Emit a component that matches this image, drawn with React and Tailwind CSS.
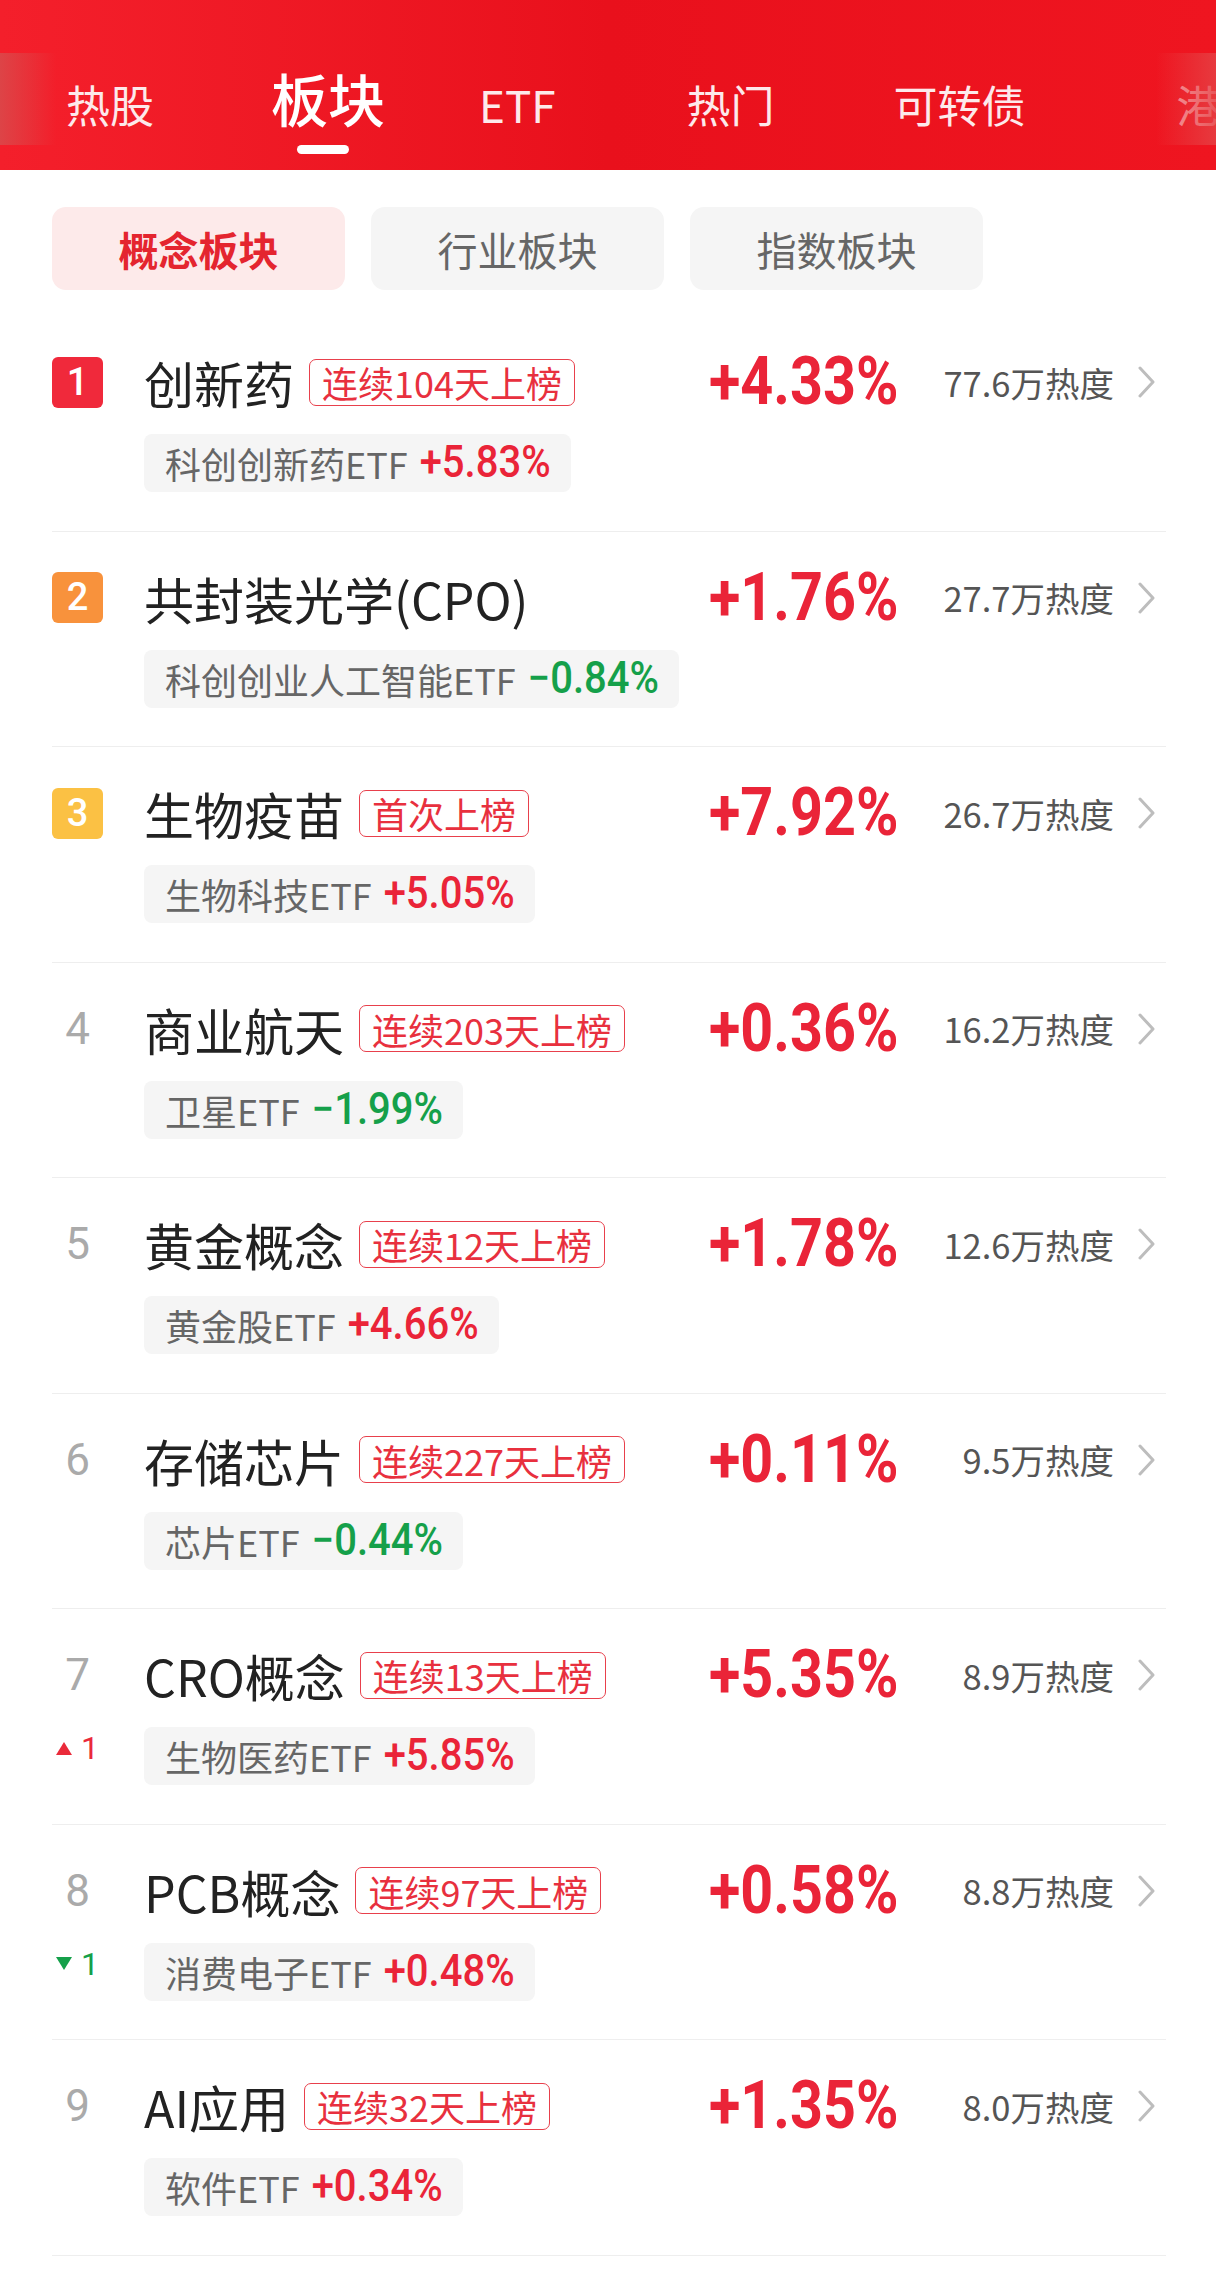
import React from 'react';

const cjk = "font-['Noto_Sans_CJK_SC','Noto_Sans',sans-serif]";
const num = "font-['Roboto','Noto_Sans_CJK_SC',sans-serif]";

const rows = [
  { rank: 1, name: '创新药', tag: '连续104天上榜', pct: '+4.33%', heat: '77.6万热度', etf: '科创创新药ETF', etfPct: '+5.83%', up: true },
  { rank: 2, name: '共封装光学(CPO)', tag: null, pct: '+1.76%', heat: '27.7万热度', etf: '科创创业人工智能ETF', etfPct: '−0.84%', up: false },
  { rank: 3, name: '生物疫苗', tag: '首次上榜', pct: '+7.92%', heat: '26.7万热度', etf: '生物科技ETF', etfPct: '+5.05%', up: true },
  { rank: 4, name: '商业航天', tag: '连续203天上榜', pct: '+0.36%', heat: '16.2万热度', etf: '卫星ETF', etfPct: '−1.99%', up: false },
  { rank: 5, name: '黄金概念', tag: '连续12天上榜', pct: '+1.78%', heat: '12.6万热度', etf: '黄金股ETF', etfPct: '+4.66%', up: true },
  { rank: 6, name: '存储芯片', tag: '连续227天上榜', pct: '+0.11%', heat: '9.5万热度', etf: '芯片ETF', etfPct: '−0.44%', up: false },
  { rank: 7, name: 'CRO概念', tag: '连续13天上榜', pct: '+5.35%', heat: '8.9万热度', etf: '生物医药ETF', etfPct: '+5.85%', up: true, change: 'up' },
  { rank: 8, name: 'PCB概念', tag: '连续97天上榜', pct: '+0.58%', heat: '8.8万热度', etf: '消费电子ETF', etfPct: '+0.48%', up: true, change: 'down' },
  { rank: 9, name: 'AI应用', tag: '连续32天上榜', pct: '+1.35%', heat: '8.0万热度', etf: '软件ETF', etfPct: '+0.34%', up: true },
];

const badgeColors = { 1: 'bg-[#f0293b]', 2: 'bg-[#f8923c]', 3: 'bg-[#fbc144]' };

const Rank = ({ rank }) => {
  if (badgeColors[rank]) {
    return (
      <div className={`w-[51px] h-[51px] rounded-[6px] flex items-center justify-center text-white text-[38px] font-medium ${num} ${badgeColors[rank]}`}>
        {rank}
      </div>
    );
  }
  return <span className={`text-[44px] leading-none text-[#aaaaaa] ${num}`}>{rank}</span>;
};

const Change = ({ dir }) => {
  if (!dir) return null;
  const up = dir === 'up';
  return (
    <div className={`flex items-center -translate-y-[8px] ${up ? 'text-[#ea2a3a]' : 'text-[#15a04a]'}`}>
      <svg width="16" height="13" viewBox="0 0 16 13">
        {up ? <polygon points="8,0 16,13 0,13" fill="currentColor" /> : <polygon points="0,0 16,0 8,13" fill="currentColor" />}
      </svg>
      <span className={`ml-[9px] text-[32px] leading-none ${num}`}>1</span>
    </div>
  );
};

const Chevron = () => (
  <svg width="17" height="32" viewBox="0 0 17 32" className="shrink-0">
    <polyline points="2,2 15,16 2,30" fill="none" stroke="#bdbdbd" strokeWidth="3" strokeLinecap="round" strokeLinejoin="round" />
  </svg>
);

const Row = ({ row }) => (
  <div className="flex border-b border-[#eeeeee] pt-[36px] pb-[38.5px]">
    <div className="w-[92px] flex flex-col shrink-0">
      <div className="h-[60px] w-[51px] flex items-center justify-center">
        <Rank rank={row.rank} />
      </div>
      <div className="mt-[22px] h-[58px] w-[51px] flex items-center justify-center">
        <Change dir={row.change} />
      </div>
    </div>
    <div className="flex-1 flex flex-col">
      <div className="h-[60px] flex items-center">
        <div className="w-[565px] flex items-center shrink-0">
          <span className={`text-[50px] leading-none text-[#222222] ${cjk}`}>{row.name}</span>
          {row.tag && (
            <span className={`ml-[15px] h-[47px] px-[12px] flex items-center border-[1.5px] border-[#e8404c] rounded-[7px] text-[36px] leading-none text-[#e8303e] ${cjk}`}>
              {row.tag}
            </span>
          )}
        </div>
        <div className="w-[187px] shrink-0">
          <span className={`inline-block scale-y-[1.15] text-[57.5px] leading-none font-bold text-[#ea2438] ${num}`}>{row.pct}</span>
        </div>
        <div className={`w-[218px] shrink-0 text-right text-[34.5px] leading-none text-[#555555] ${cjk}`}>{row.heat}</div>
        <div className="ml-[24px] flex items-center">
          <Chevron />
        </div>
      </div>
      <div className="mt-[22px] flex">
        <div className="h-[58px] pl-[21px] pr-[20px] flex items-center rounded-[8px] bg-[#f5f5f5]">
          <span className={`text-[36px] leading-none text-[#666666] ${cjk}`}>{row.etf}</span>
          <span className={`ml-[12px] inline-block scale-y-[1.1] text-[40px] leading-none font-medium ${row.up ? 'text-[#ea2438]' : 'text-[#15a04a]'} ${num}`}>
            {row.etfPct}
          </span>
        </div>
      </div>
    </div>
  </div>
);

const topTabs = [
  { label: '热股', ml: 'ml-[66px]' },
  { label: '板块', ml: 'ml-[117px]', active: true },
  { label: 'ETF', ml: 'ml-[94px]' },
  { label: '热门', ml: 'ml-[131px]' },
  { label: '可转债', ml: 'ml-[119px]' },
  { label: '港', ml: 'ml-[151px]', faded: true },
];

export default function App() {
  return (
    <div className={`w-[1216px] min-h-[2283px] bg-white ${cjk}`}>
      <div className="relative h-[170px] overflow-hidden bg-gradient-to-r from-[#f41f2b] via-[#e9101c] to-[#ef1520]">
        <div className="flex items-end pt-[69px] whitespace-nowrap">
          {topTabs.map((t) => (
            <div key={t.label} className={`relative shrink-0 ${t.ml}`}>
              <span
                className={`block leading-none ${
                  t.active
                    ? 'text-[57px] font-medium text-white'
                    : t.faded
                    ? 'text-[44px] text-[#f7a5aa]'
                    : 'text-[44px] text-[#fde9eb]'
                }`}
              >
                {t.label}
              </span>
              {t.active && (
                <div className="absolute left-[26px] top-full mt-[19px] w-[52px] h-[9px] rounded-full bg-white" />
              )}
            </div>
          ))}
        </div>
        <div className="absolute left-0 top-[53px] h-[92px] w-[56px] bg-gradient-to-r from-[#dd4447] to-transparent" />
        <div className="absolute right-0 top-[53px] h-[92px] w-[60px] bg-gradient-to-l from-[#e54346] to-transparent opacity-80" />
      </div>

      <div className="flex gap-[26px] px-[52px] pt-[37px]">
        <div className="w-[293px] h-[83px] rounded-[14px] bg-[#fdeaea] flex items-center justify-center text-[40px] font-bold text-[#e4252f]">
          概念板块
        </div>
        <div className="w-[293px] h-[83px] rounded-[14px] bg-[#f5f5f5] flex items-center justify-center text-[40px] text-[#666666]">
          行业板块
        </div>
        <div className="w-[293px] h-[83px] rounded-[14px] bg-[#f5f5f5] flex items-center justify-center text-[40px] text-[#666666]">
          指数板块
        </div>
      </div>

      <div className="mx-[52px] mr-[50px] mt-[26px]">
        {rows.map((r) => (
          <Row key={r.rank} row={r} />
        ))}
      </div>
    </div>
  );
}
